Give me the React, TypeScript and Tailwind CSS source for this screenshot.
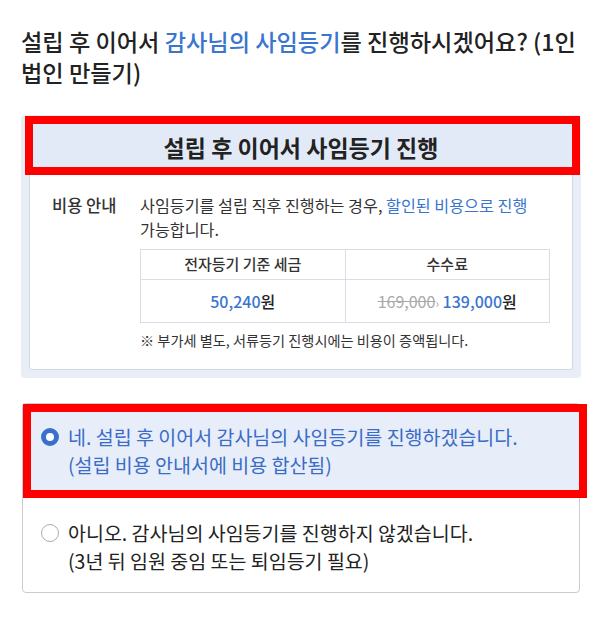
const font = { fontFamily: '"Noto Sans CJK KR", "Noto Sans", sans-serif' };

function Radio({ checked }: { checked: boolean }) {
  return checked ? (
    <span className="mt-[5px] block h-[18px] w-[18px] shrink-0 rounded-full border-[5px] border-[#3a6fd0] bg-white" />
  ) : (
    <span className="mt-[5px] block h-[18px] w-[18px] shrink-0 rounded-full border-[1.5px] border-[#a8abb3] bg-white" />
  );
}

export default function App() {
  return (
    <div className="min-h-[622px] bg-white px-[21px] pt-[26px] text-[#222]" style={font}>
      <h1 className="w-[560px] text-[23.2px] font-medium leading-[31px] break-keep">
        설립 후 이어서 <span className="text-[#3a75d0]">감사님의 사임등기</span>를 진행하시겠어요? (1인 법인 만들기)
      </h1>

      {/* 비용 안내 패널 */}
      <div className="mt-[27px] w-[560px] rounded-[4px] bg-[#e9edf6] p-[8px]">
        <div className="rounded-[3px] border border-[#d3d9e4] bg-white">
          <div className="relative flex h-[47px] items-center justify-center rounded-t-[3px] border-b border-[#cbd5e6] bg-[#e2eaf7]">
            <span className="text-[23px] font-semibold text-[#222]">설립 후 이어서 사임등기 진행</span>
            <div className="pointer-events-none absolute -top-[8px] -right-[8px] -bottom-[5px] -left-[5px] border-[8px] border-[#ff0000]" />
          </div>
          <div className="flex px-[22px] pt-[22px] pb-[19px]">
            <div className="w-[88px] shrink-0 text-[16.5px] font-medium leading-[24px] text-[#333]">비용 안내</div>
            <div className="flex-1">
              <p className="text-[16.2px] leading-[24px] text-[#333] break-keep">
                사임등기를 설립 직후 진행하는 경우, <span className="text-[#3a75d0]">할인된 비용으로 진행</span> 가능합니다.
              </p>
              <table className="mt-[8px] w-full border-collapse text-center">
                <thead>
                  <tr className="h-[30px]">
                    <th className="w-1/2 border border-[#d9dde6] text-[15px] font-medium text-[#333]">전자등기 기준 세금</th>
                    <th className="w-1/2 border border-[#d9dde6] text-[15px] font-medium text-[#333]">수수료</th>
                  </tr>
                </thead>
                <tbody>
                  <tr className="h-[43px]">
                    <td className="border border-[#d9dde6] text-[16px] font-medium">
                      <span className="text-[#3a75d0]">50,240</span>원
                    </td>
                    <td className="border border-[#d9dde6] text-[16px] font-medium">
                      <span className="font-normal text-[#aaa] line-through">169,000</span>
                      <span className="text-[12px] font-normal text-[#aaa]">›</span>{" "}
                      <span className="text-[#3a75d0]">139,000</span>원
                    </td>
                  </tr>
                </tbody>
              </table>
              <p className="mt-[7px] text-[14.2px] leading-[20px] text-[#333]">
                ※ 부가세 별도, 서류등기 진행시에는 비용이 증액됩니다.
              </p>
            </div>
          </div>
        </div>
      </div>

      {/* 선택지 */}
      <div className="mt-[25px] ml-[1px] w-[558px] rounded-[4px] border border-[#c9ccd4] bg-white">
        <div className="relative -mr-[8px] flex gap-[9px] bg-[#e7eef9] py-[19px] pl-[18px] pr-[20px]">
          <Radio checked />
          <p className="text-[19.5px] leading-[28px] text-[#3a6cc8]">
            네. 설립 후 이어서 감사님의 사임등기를 진행하겠습니다.
            <br />
            (설립 비용 안내서에 비용 합산됨)
          </p>
          <div className="pointer-events-none absolute inset-0 border-[8px] border-[#ff0000]" />
        </div>
        <div className="flex gap-[9px] pt-[21px] pb-[17px] pl-[18px] pr-[20px]">
          <Radio checked={false} />
          <p className="text-[19.5px] leading-[28px] text-[#222]">
            아니오. 감사님의 사임등기를 진행하지 않겠습니다.
            <br />
            (3년 뒤 임원 중임 또는 퇴임등기 필요)
          </p>
        </div>
      </div>
    </div>
  );
}
